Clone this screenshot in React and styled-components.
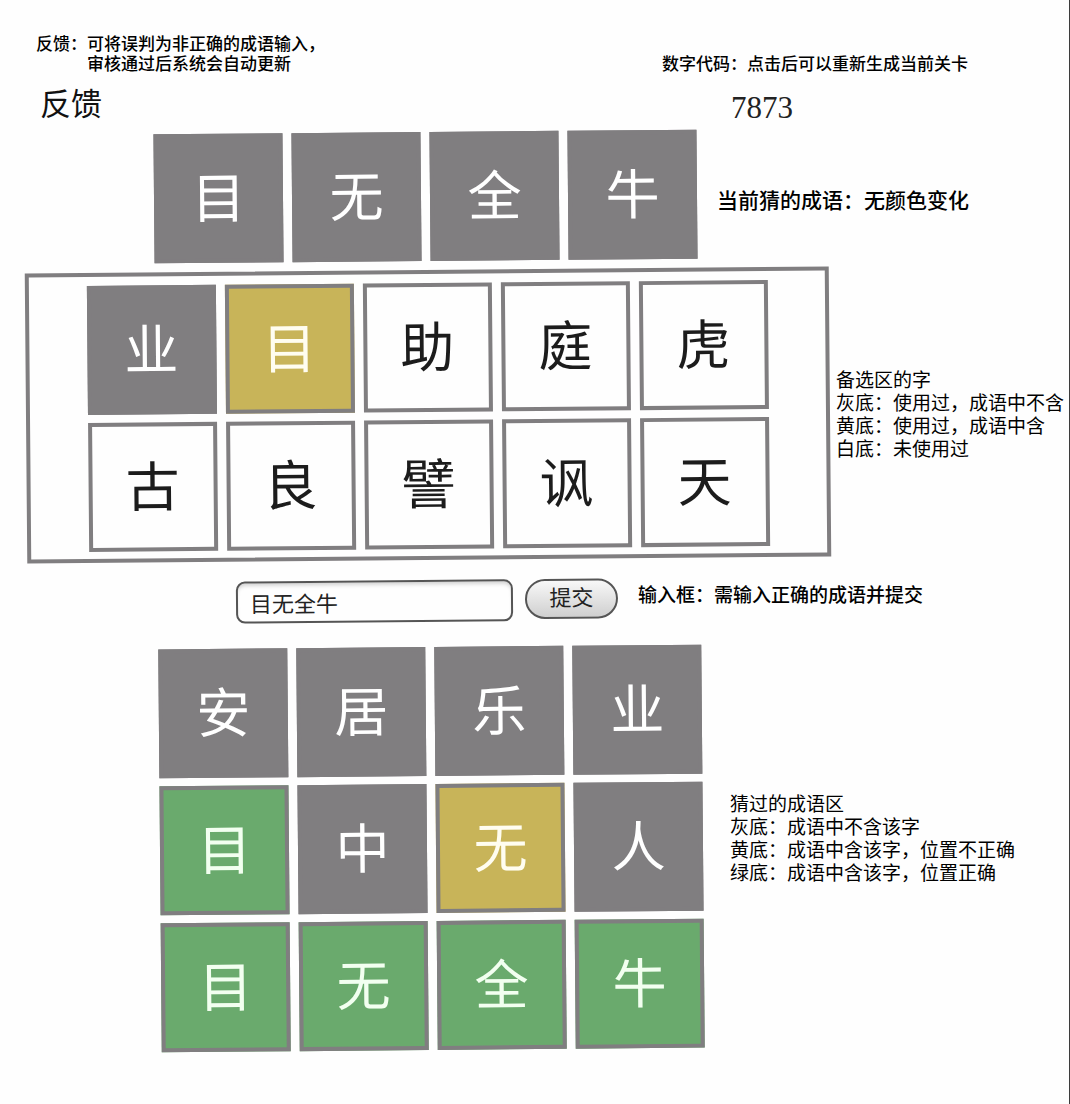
import React, { useState } from "react";
import styled, { createGlobalStyle } from "styled-components";

const GlobalStyle = createGlobalStyle`
  * { box-sizing: border-box; }
  body {
    margin: 0;
    background: #fefefe;
    color: #000;
    font-family: "Liberation Sans", "Noto Sans CJK SC", sans-serif;
  }
`;

const tones = {
  gray: { background: "#807e80", color: "#fff" },
  yellow: { background: "#c8b459", color: "#fffdf0" },
  green: { background: "#6aaa6d", color: "#f2fff0" },
  white: { background: "#fefefe", color: "#1c1c1c" },
};

const Page = styled.main`
  min-height: 100vh;
  border-right: 1px solid #3c3c3c;
  padding-bottom: 48px;
`;

const Header = styled.header`
  display: grid;
  grid-template-columns: 626fr 407fr;
  align-items: end;
  padding: 35px 0 7px 36px;
`;

const HeaderBlock = styled.div`
  display: flex;
  flex-direction: column;
  align-items: flex-start;
  gap: ${(p) => p.$gap}px;
`;

const Caption = styled.p`
  margin: 0;
  font-size: 17px;
  line-height: 20px;
  font-weight: 500;
  white-space: nowrap;
`;

const CaptionLine = styled.span`
  display: block;
  padding-left: ${(p) => (p.$indent ? "3em" : 0)};
`;

const FeedbackLink = styled.a`
  margin-left: 4px;
  font-size: 31px;
  line-height: 40px;
  color: #111;
  text-decoration: none;
`;

const LevelCode = styled.button`
  margin-left: 69px;
  padding: 0;
  border: 0;
  background: none;
  color: #222;
  font-family: "Liberation Serif", serif;
  font-size: 31px;
  line-height: 34px;
  cursor: pointer;
`;

const Section = styled.section`
  display: flex;
  align-items: ${(p) => p.$align || "center"};
  gap: ${(p) => p.$gap}px;
  padding-left: ${(p) => p.$inset}px;
  margin-bottom: ${(p) => p.$after || 0}px;
`;

const TileGrid = styled.ul`
  display: grid;
  grid-template-columns: repeat(${(p) => p.$columns}, 129px);
  gap: 8px 9px;
  flex: none;
  margin: 0;
  padding: 0;
  list-style: none;
  transform: ${(p) => (p.$tilted ? "rotate(-0.5deg)" : "none")};
`;

const Tile = styled.li`
  display: flex;
  align-items: center;
  justify-content: center;
  height: 129px;
  border: 4px solid #807e80;
  background: ${(p) => tones[p.$tone].background};
  color: ${(p) => tones[p.$tone].color};
  font-size: 54px;
  line-height: 64px;
`;

const Panel = styled.div`
  display: flex;
  justify-content: center;
  flex: none;
  width: 804px;
  padding: 9px 0 7px;
  border: 4px solid #807e80;
  transform: rotate(-0.5deg);
`;

const GuessForm = styled.form`
  display: flex;
  align-items: flex-start;
  gap: 12px;
  flex: none;
  transform: rotate(-0.5deg);
`;

const GuessInput = styled.input`
  width: 277px;
  height: 42px;
  padding: 0 12px;
  border: 2px solid #555;
  border-radius: 9px;
  background: #fefefe;
  box-shadow: inset 0 4px 4px -2px #ccc;
  color: #222;
  font-family: inherit;
  font-size: 22px;
`;

const SubmitButton = styled.button`
  width: 93px;
  height: 40px;
  padding: 0;
  border: 2px solid #555;
  border-radius: 20px;
  background: linear-gradient(#f8f8f8, #cfcfcf);
  color: #222;
  font-family: inherit;
  font-size: 22px;
  line-height: 36px;
`;

const Note = styled.div`
  padding-top: ${(p) => p.$top || 0}px;
  font-size: ${(p) => (p.$large ? 21 : 19)}px;
  line-height: 23px;
  font-weight: ${(p) => (p.$strong ? 500 : 400)};
  white-space: nowrap;
`;

const NoteLine = styled.p`
  margin: 0;
`;

const current = ["目", "无", "全", "牛"].map((char) => ({ char, tone: "gray" }));

const candidates = [
  { char: "业", tone: "gray" },
  { char: "目", tone: "yellow" },
  ...["助", "庭", "虎", "古", "良", "譬", "讽", "天"].map((char) => ({ char, tone: "white" })),
];

const history = [
  { char: "安", tone: "gray" },
  { char: "居", tone: "gray" },
  { char: "乐", tone: "gray" },
  { char: "业", tone: "gray" },
  { char: "目", tone: "green" },
  { char: "中", tone: "gray" },
  { char: "无", tone: "yellow" },
  { char: "人", tone: "gray" },
  { char: "目", tone: "green" },
  { char: "无", tone: "green" },
  { char: "全", tone: "green" },
  { char: "牛", tone: "green" },
];

function Tiles({ items, columns, tilted }) {
  return (
    <TileGrid $columns={columns} $tilted={tilted}>
      {items.map((item, i) => (
        <Tile key={i} $tone={item.tone}>{item.char}</Tile>
      ))}
    </TileGrid>
  );
}

export default function App() {
  const [guess, setGuess] = useState("目无全牛");
  return (
    <>
      <GlobalStyle />
      <Page>
        <Header>
          <HeaderBlock $gap={10}>
            <Caption>
              <CaptionLine>反馈：可将误判为非正确的成语输入，</CaptionLine>
              <CaptionLine $indent>审核通过后系统会自动更新</CaptionLine>
            </Caption>
            <FeedbackLink href="#feedback">反馈</FeedbackLink>
          </HeaderBlock>
          <HeaderBlock $gap={16}>
            <Caption>数字代码：点击后可以重新生成当前关卡</Caption>
            <LevelCode type="button">7873</LevelCode>
          </HeaderBlock>
        </Header>

        <Section $inset={154} $gap={20} $after={9}>
          <Tiles items={current} columns={4} tilted />
          <Note $large $strong $top={8}>当前猜的成语：无颜色变化</Note>
        </Section>

        <Section $inset={26} $gap={6} $after={20}>
          <Panel>
            <Tiles items={candidates} columns={5} />
          </Panel>
          <Note>
            <NoteLine>备选区的字</NoteLine>
            <NoteLine>灰底：使用过，成语中不含</NoteLine>
            <NoteLine>黄底：使用过，成语中含</NoteLine>
            <NoteLine>白底：未使用过</NoteLine>
          </Note>
        </Section>

        <Section $inset={236} $gap={20} $align="flex-start" $after={25}>
          <GuessForm onSubmit={(e) => e.preventDefault()}>
            <GuessInput id="guess" value={guess} onChange={(e) => setGuess(e.target.value)} />
            <SubmitButton type="submit">提交</SubmitButton>
          </GuessForm>
          <Note as="label" htmlFor="guess" $strong $top={4}>输入框：需输入正确的成语并提交</Note>
        </Section>

        <Section $inset={160} $gap={27} $align="flex-start">
          <Tiles items={history} columns={4} tilted />
          <Note $top={146}>
            <NoteLine>猜过的成语区</NoteLine>
            <NoteLine>灰底：成语中不含该字</NoteLine>
            <NoteLine>黄底：成语中含该字，位置不正确</NoteLine>
            <NoteLine>绿底：成语中含该字，位置正确</NoteLine>
          </Note>
        </Section>
      </Page>
    </>
  );
}
